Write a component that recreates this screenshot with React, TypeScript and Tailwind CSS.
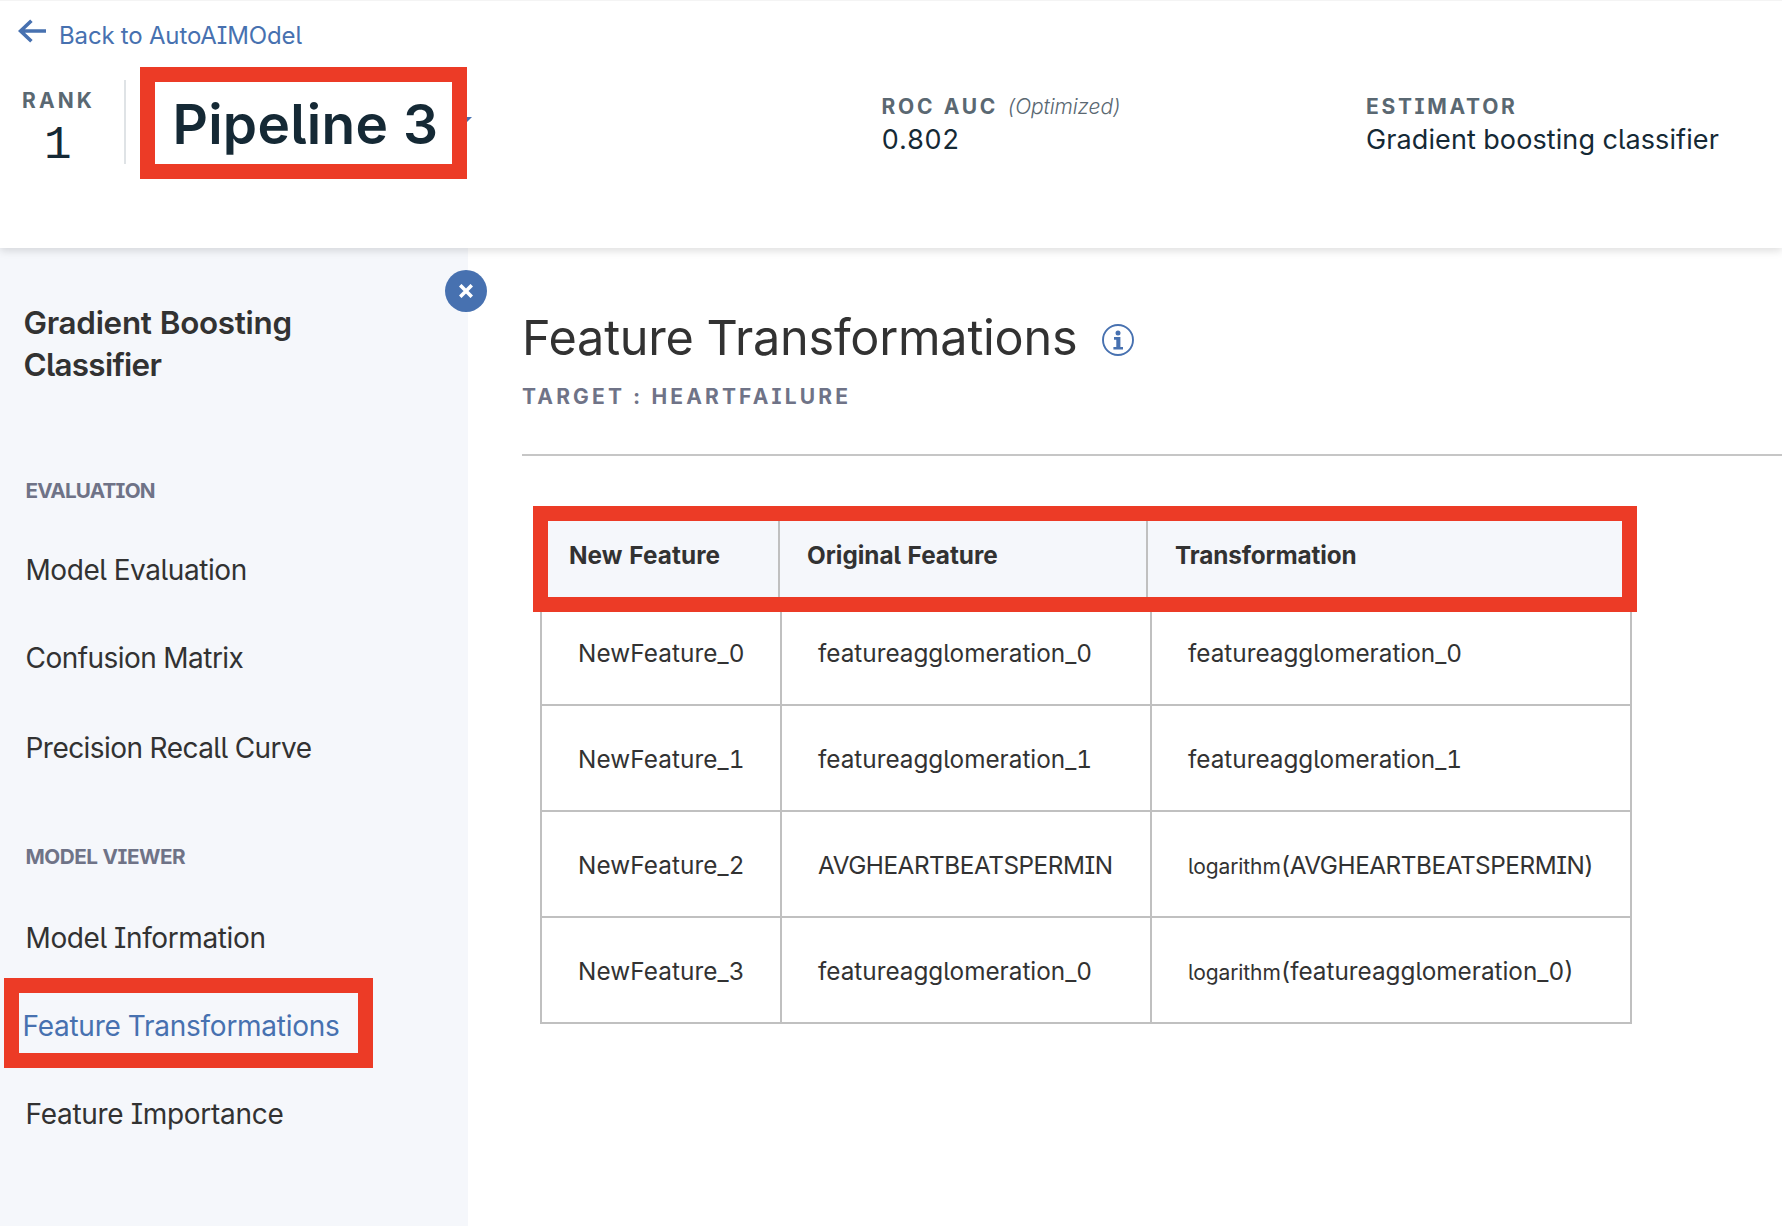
function BackArrow() {
  return (
    <svg className="h-6 w-[29px] shrink-0" viewBox="0 0 29 24" fill="none" stroke="#4771b0" strokeWidth="3.6">
      <path d="M28 12H3M13.4 1.8L2.6 12l10.8 10.2" strokeLinejoin="miter" />
    </svg>
  );
}

function InfoIcon() {
  return (
    <svg className="h-8 w-8 shrink-0" viewBox="0 0 32 32">
      <circle cx="16" cy="16" r="15" fill="none" stroke="#4771b0" strokeWidth="1.9" />
      <circle cx="16" cy="9" r="2.5" fill="#4771b0" />
      <path d="M12 13.1h6.4v9.8h2.6v2.6h-9.6v-2.6h2.9v-7.2H12z" fill="#4771b0" />
    </svg>
  );
}

function CloseButton() {
  return (
    <button className="absolute -right-[19px] top-[22px] flex h-[42px] w-[42px] items-center justify-center rounded-full bg-[#4771b0]">
      <svg className="h-[14px] w-[14px]" viewBox="0 0 14 14" stroke="#fff" strokeWidth="3.6">
        <path d="M1.2 1.2l11.6 11.6M12.8 1.2L1.2 12.8" />
      </svg>
    </button>
  );
}

const rows = [
  { name: 'NewFeature_0', source: 'featureagglomeration_0', fn: '', arg: 'featureagglomeration_0', tracking: 'tracking-normal' },
  { name: 'NewFeature_1', source: 'featureagglomeration_1', fn: '', arg: 'featureagglomeration_1', tracking: 'tracking-normal' },
  { name: 'NewFeature_2', source: 'AVGHEARTBEATSPERMIN', fn: 'logarithm', arg: '(AVGHEARTBEATSPERMIN)', tracking: 'tracking-[-0.45px]' },
  { name: 'NewFeature_3', source: 'featureagglomeration_0', fn: 'logarithm', arg: '(featureagglomeration_0)', tracking: 'tracking-normal' },
];

const navItem = 'block pl-[25.5px] text-[28px] leading-9 text-[#323232]';
const groupLabel = 'pl-[25.5px] text-[20.7px] font-bold leading-7 text-[#6f7387]';
const metricLabel = 'text-[21px] font-bold leading-7 text-[#5a6872]';

export default function App() {
  return (
    <div className="flex h-[1226px] w-[1782px] flex-col overflow-hidden bg-white font-['Inter',sans-serif] [font-feature-settings:'cv05','cv08','tnum']">
      <header className="relative z-10 h-[248px] shrink-0 border-t border-[#f4f4f4] bg-white shadow-[0_3px_8px_rgba(0,0,0,0.13)]">
        <div className="flex pl-[18px] pt-[18px] text-[#4771b0]">
          <BackArrow />
          <a className="ml-3 pt-px text-[24px] leading-8 tracking-[-0.13px]">Back to AutoAIMOdel</a>
        </div>
        <div className="flex items-start pt-[15px]">
          <div className="flex w-[124px] flex-col pt-5">
            <span className={`pl-[22px] tracking-[3.1px] ${metricLabel}`}>RANK</span>
            <span className="mt-[9px] pl-[44px] font-['Liberation_Mono'] text-[46px] leading-[44px] text-[#152935]">1</span>
          </div>
          <div className="mt-[13px] h-[84px] w-0.5 bg-[#dfe3e6]" />
          <div className="relative ml-[14px] flex h-[112px] w-[327px] items-center border-[15px] border-[#ec3b26] pl-[17.5px]">
            <h1 className="whitespace-nowrap pt-0.5 text-[55px] font-semibold leading-[70px] tracking-[0.25px] text-[#152935]">Pipeline 3</h1>
            <svg className="absolute -right-[20px] top-[35px] h-[5px] w-[5px]" viewBox="0 0 5 5">
              <path d="M0 0h5L0 5z" fill="#4771b0" />
            </svg>
          </div>
          <div className="ml-[414.5px] flex w-[484.5px] flex-col pt-[26px]">
            <div className="flex">
              <span className={`tracking-[2.75px] ${metricLabel}`}>ROC AUC</span>
              <span className="ml-[9px] text-[21px] font-light italic leading-7 tracking-[-0.1px] text-[#5a6872]">(Optimized)</span>
            </div>
            <span className="mt-px text-[27px] leading-9 tracking-[0.2px] text-[#152935]">0.802</span>
          </div>
          <div className="flex flex-col pt-[26px]">
            <span className={`tracking-[2.7px] ${metricLabel}`}>ESTIMATOR</span>
            <span className="mt-px text-[27px] leading-9 tracking-[0.1px] text-[#152935]">Gradient boosting classifier</span>
          </div>
        </div>
      </header>

      <div className="flex grow">
        <aside className="relative flex w-[468px] shrink-0 flex-col bg-[#f5f7fb] pt-[54px]">
          <CloseButton />
          <h2 className="flex flex-col pl-[23.5px] text-[31.4px] font-semibold leading-[42px] text-[#323232]">
            <span className="tracking-[-0.28px]">Gradient Boosting</span>
            <span className="tracking-[-0.72px]">Classifier</span>
          </h2>
          <span className={`mt-[91px] tracking-[-0.8px] ${groupLabel}`}>EVALUATION</span>
          <a className={`mt-[47px] tracking-[-0.43px] ${navItem}`}>Model Evaluation</a>
          <a className={`mt-[52px] tracking-[-0.53px] ${navItem}`}>Confusion Matrix</a>
          <a className={`mt-[54px] tracking-[-0.54px] ${navItem}`}>Precision Recall Curve</a>
          <span className={`mt-[77px] tracking-[-0.48px] ${groupLabel}`}>MODEL VIEWER</span>
          <a className={`mt-[49px] tracking-[-0.38px] ${navItem}`}>Model Information</a>
          <div className="ml-1 mt-[22px] h-[90px] w-[369px] border-[15px] border-[#ec3b26] pl-[3.5px] pt-[15px]">
            <a className="block whitespace-nowrap text-[28px] leading-9 tracking-[-0.26px] text-[#4771b0]">Feature Transformations</a>
          </div>
          <a className={`mt-7 tracking-[-0.28px] ${navItem}`}>Feature Importance</a>
        </aside>

        <main className="flex min-w-0 grow flex-col pl-[54px] pt-[60px]">
          <div className="flex items-center">
            <h1 className="whitespace-nowrap text-[48.6px] leading-[60px] tracking-[-0.23px] text-[#323232]">Feature Transformations</h1>
            <div className="ml-[25px] pt-1"><InfoIcon /></div>
          </div>
          <span className="mt-[15px] text-[21px] font-bold leading-7 tracking-[3.15px] text-[#6f7387]">TARGET : HEARTFAILURE</span>
          <div className="mt-[43px] h-0.5 w-full bg-[#c6c6c6]" />

          <div className="ml-[11px] mt-[50px] grid h-[106px] w-[1104px] grid-cols-[232px_368px_1fr] border-[15px] border-[#ec3b26] bg-[#f5f7fb] text-[24.3px] font-bold leading-9 text-[#323232]">
            <div className="border-r-2 border-[#c0c0c0] pl-[21px] pt-4 tracking-[0.1px]">New Feature</div>
            <div className="border-r-2 border-[#c0c0c0] pl-[27px] pt-4">Original Feature</div>
            <div className="pl-[27px] pt-4 tracking-[-0.12px]">Transformation</div>
          </div>
          <div className="ml-[18px] w-[1092px] border-l-2 border-[#c0c0c0] text-[24.3px] leading-9 text-[#323232]">
            {rows.map(({ name, source, fn, arg, tracking }, i) => (
              <div key={name} className={`grid grid-cols-[240px_370px_1fr] border-b-2 border-[#c0c0c0] ${i === 0 ? 'h-[94px] *:pt-[23px]' : 'h-[106px] *:pt-[35px]'}`}>
                <div className="border-r-2 border-[#c0c0c0] pl-9 tracking-[0.1px]">{name}</div>
                <div className={`border-r-2 border-[#c0c0c0] pl-9 ${tracking}`}>{source}</div>
                <div className="border-r-2 border-[#c0c0c0] pl-9">
                  {fn && <span className="text-[21px] tracking-[-0.12px]">{fn}</span>}
                  <span className={tracking}>{arg}</span>
                </div>
              </div>
            ))}
          </div>
        </main>
      </div>
    </div>
  );
}
